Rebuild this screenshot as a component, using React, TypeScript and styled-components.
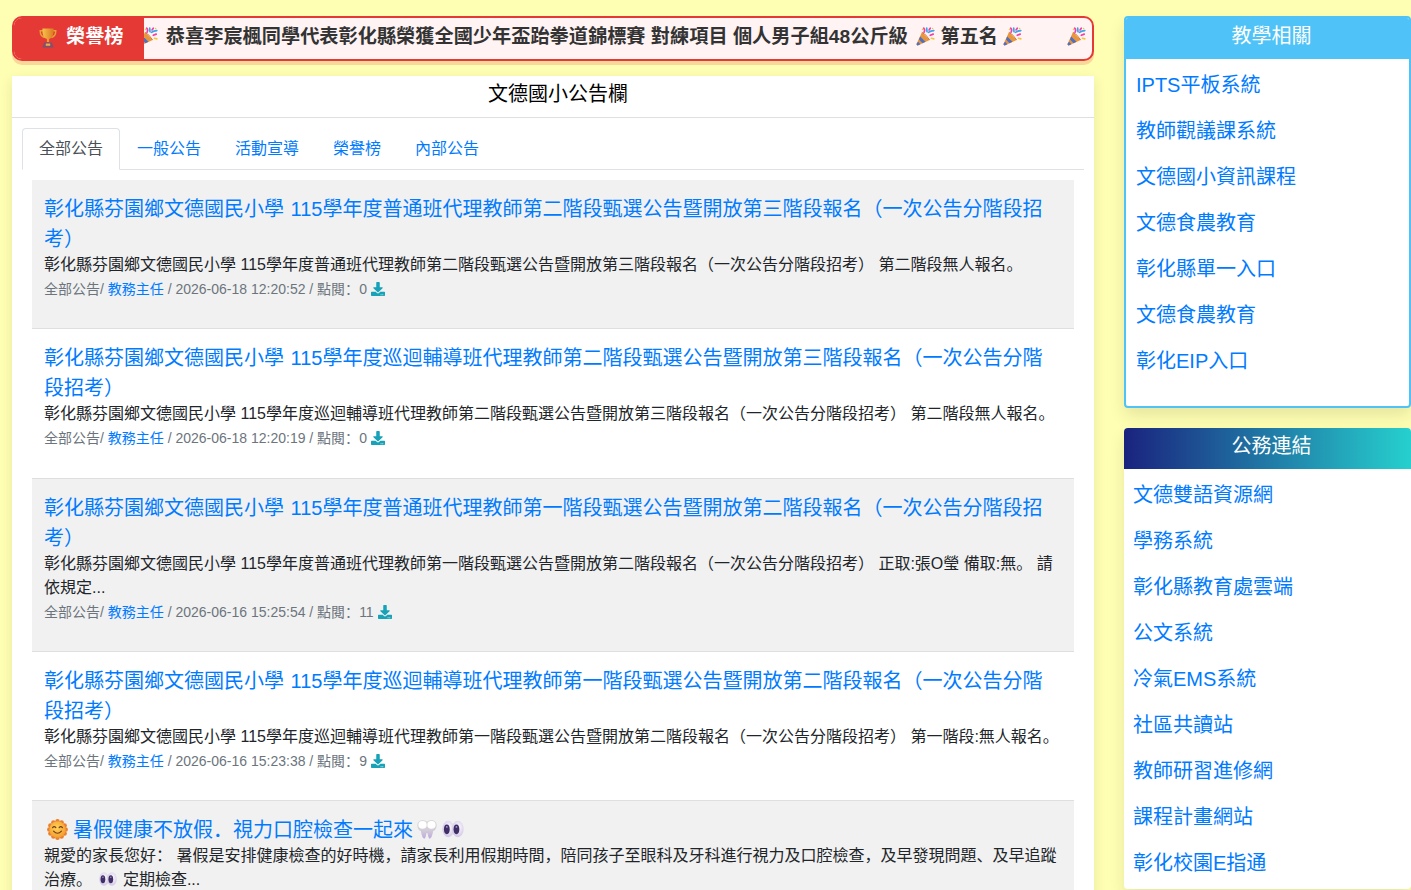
import React from 'react';
import styled, { createGlobalStyle } from 'styled-components';
import { FaDownload } from 'react-icons/fa';

const Global = createGlobalStyle`
  html, body { margin: 0; padding: 0; height: 890px; overflow: hidden; background: #ffffb3; }
  body { font-family: "Liberation Sans", "Noto Sans CJK SC", sans-serif; font-size: 16px; line-height: 1.5; color: #212529; }
  * { box-sizing: border-box; }
  a { color: #007bff; text-decoration: none; }
`;

const Page = styled.div`
  display: flex;
  gap: 30px;
  padding: 16px 0 0 12px;
  align-items: flex-start;
  width: 1411px;
`;
const Main = styled.main`
  width: 1082px;
  flex: none;
  display: flex;
  flex-direction: column;
  gap: 15px;
`;
const Side = styled.aside`
  width: 287px;
  flex: none;
  display: flex;
  flex-direction: column;
  gap: 20px;
`;
const Ticker = styled.div`
  display: flex;
  height: 45px;
  border: 2px solid #e53935;
  border-radius: 10px;
  background: #fff3f3;
  box-shadow: 0 4px 0 rgba(229, 57, 53, 0.2);
  overflow: hidden;
`;
const TickerLabel = styled.div`
  flex: none;
  width: 130px;
  padding: 0 0 2px 25px;
  background: #e53935;
  color: #fff;
  font-weight: 700;
  font-size: 19.2px;
  display: flex;
  align-items: center;
  gap: 9px;
`;
const TickerTrack = styled.div`
  flex: 1;
  overflow: hidden;
  display: flex;
  align-items: center;
  padding-bottom: 2px;
  white-space: nowrap;
  font-size: 19.2px;
  font-weight: 700;
  color: #333;
`;
const TickerText = styled.span`
  margin-left: -5.5px;
`;
const Emoji = styled.svg<{ $l?: number; $r?: number; $drop?: number }>`
  display: inline-block;
  vertical-align: -${p => p.$drop ?? 3}px;
  margin-left: ${p => p.$l ?? 0}px;
  margin-right: ${p => p.$r ?? 0}px;
`;
const Card = styled.section`
  background: #fff;
  box-shadow: 0 4px 12px rgba(0, 0, 0, 0.1);
  height: 900px;
`;
const CardHead = styled.h1`
  margin: 0;
  height: 42px;
  border-bottom: 1px solid #dfdfdf;
  font-size: 20px;
  font-weight: 400;
  line-height: 30px;
  padding: 3px 0 0 10px;
  color: #000;
  text-align: center;
`;
const CardBody = styled.div`
  padding: 10px;
`;
const Tabs = styled.nav`
  display: flex;
  border-bottom: 1px solid #dee2e6;
  height: 42px;
`;
const Tab = styled.a<{ $active?: boolean }>`
  height: 42px;
  padding: 8px 16px;
  border: 1px solid ${p => (p.$active ? '#dee2e6' : 'transparent')};
  border-bottom-color: ${p => (p.$active ? '#fff' : 'transparent')};
  border-radius: 4px 4px 0 0;
  background: ${p => (p.$active ? '#fff' : 'transparent')};
  color: ${p => (p.$active ? '#495057' : '#007bff')};
`;
const List = styled.div`
  margin: 10px 10px 0;
`;
const Row = styled.article<{ $shade?: boolean }>`
  padding: 14px 12px 28.25px;
  background: ${p => (p.$shade ? '#f1f1f1' : '#fff')};
  border-bottom: 1px solid #dfdfdf;
`;
const RowTitle = styled.a`
  display: block;
  font-size: 20px;
  line-height: 30px;
  word-spacing: 1px;
  margin-bottom: -1px;
`;
const RowText = styled.p`
  margin: 0;
`;
const Meta = styled.div`
  font-size: 14px;
  line-height: 21px;
  margin-top: 2px;
  color: #6c757d;
`;
const DownloadIcon = styled(FaDownload)`
  color: #17a2b8;
  font-size: 14px;
  vertical-align: -2px;
`;
const SideCard = styled.section<{ $outlined?: boolean }>`
  background: #fff;
  border-radius: 4px;
  overflow: hidden;
  box-shadow: 0 8px 16px rgba(0, 0, 0, 0.1);
  border: ${p => (p.$outlined ? '2px solid #4fc3f7' : 'none')};
`;
const SideHead = styled.h2<{ $gradient?: boolean }>`
  margin: 0;
  height: 41px;
  background: ${p => (p.$gradient ? 'linear-gradient(90deg, #1a237e, #26d0ce)' : '#4fc3f7')};
  color: #fff;
  font-size: 20px;
  font-weight: 400;
  line-height: 36px;
  padding-left: 8px;
  text-align: center;
`;
const SideLinks = styled.ul<{ $outlined?: boolean }>`
  list-style: none;
  margin: 0;
  padding: ${p => (p.$outlined ? '6px 10px 19px' : '6px 9px 0')};
`;
const SideItem = styled.li`
  height: 46px;
  font-size: 20px;
  line-height: 30px;
  padding-top: 5px;
`;

type EP = { size?: number; l?: number; r?: number };

const Popper = ({ size = 19, l, r }: EP) => (
  <Emoji width={size} height={size} viewBox="0 0 32 32" $l={l} $r={r}>
    <path d="M10 9 L23 22 L3 31 Q0 31 1 28 Z" fill="#e9973a" />
    <path d="M7 16 L16 25 L11 27.5 L5 21 Z" fill="#4f6fc4" />
    <path d="M3.5 25 L7.5 29 L3 31 Q0 31 1 28 Z" fill="#4f6fc4" />
    <path d="M10 9 Q17 12 23 22" fill="none" stroke="#c9702a" strokeWidth="1.5" />
    <g fill="none" strokeWidth="2.8" strokeLinecap="round">
      <path d="M13 2 Q16 5 13.5 9" stroke="#ef3fa8" />
      <path d="M21 9 Q25 6 30 6" stroke="#33a8ea" />
      <path d="M18 2 L18.5 8" stroke="#33a8ea" />
      <path d="M24 2 L22 5" stroke="#ef3fa8" />
      <path d="M24 14 L29 12" stroke="#ef3fa8" />
      <path d="M26 19 L30 20" stroke="#f4c33c" />
    </g>
    <circle cx="11" cy="4" r="1.3" fill="#f4c33c" />
    <circle cx="28" cy="2.5" r="1.3" fill="#f4c33c" />
  </Emoji>
);

const Trophy = () => (
  <Emoji width={18} height={20} viewBox="0 0 32 36">
    <defs>
      <linearGradient id="cup" x1="0" y1="0" x2="1" y2="0">
        <stop offset="0" stopColor="#f8c24a" />
        <stop offset="1" stopColor="#d97a22" />
      </linearGradient>
    </defs>
    <path d="M7 5 H2 Q2 15 10 17 M25 5 H30 Q30 15 22 17" fill="none" stroke="#e8a235" strokeWidth="2.6" />
    <path d="M6 1 H26 Q27 18 18 20 V25 H14 V20 Q5 18 6 1 Z" fill="url(#cup)" />
    <path d="M9 26 H23 L26 35 H6 Z" fill="#7d5270" />
    <rect x="12" y="28" width="8" height="4" fill="#e8b04a" />
  </Emoji>
);

const Sun = () => (
  <Emoji width={21} height={21} viewBox="0 0 32 32" $l={3} $r={5} $drop={3}>
    <defs>
      <radialGradient id="sunf" cx="0.45" cy="0.4" r="0.65">
        <stop offset="0" stopColor="#ffd257" />
        <stop offset="1" stopColor="#f39a2c" />
      </radialGradient>
    </defs>
    {Array.from({ length: 12 }).map((_, i) => (
      <circle
        key={i}
        cx={16 + 12.5 * Math.cos((i * Math.PI) / 6)}
        cy={16 + 12.5 * Math.sin((i * Math.PI) / 6)}
        r="3.4"
        fill="#ea7f2c"
      />
    ))}
    <circle cx="16" cy="16" r="12.5" fill="url(#sunf)" />
    <path d="M8.5 13 Q11 10 13.5 13 M18.5 13 Q21 10 23.5 13" fill="none" stroke="#6f3d1c" strokeWidth="1.8" strokeLinecap="round" />
    <path d="M10 18.5 Q16 25 22 18.5" fill="none" stroke="#6f3d1c" strokeWidth="1.8" strokeLinecap="round" />
  </Emoji>
);

const Tooth = () => (
  <Emoji width={22} height={22} viewBox="0 0 32 32" $l={3}>
    <defs>
      <linearGradient id="tth" x1="0" y1="0" x2="0" y2="1">
        <stop offset="0" stopColor="#dcdcdc" />
        <stop offset="0.55" stopColor="#d2cdd8" />
        <stop offset="1" stopColor="#bfa9dc" />
      </linearGradient>
    </defs>
    <path d="M8 3 Q13 2 16 5 Q19 2 24 3 Q31 5 30 12 Q29 18 25 19 Q23 30 20 30 Q18 30 17 23 Q16 20 15 23 Q14 30 12 30 Q9 30 7 19 Q3 18 2 12 Q1 5 8 3 Z" fill="url(#tth)" />
    <ellipse cx="9.5" cy="10" rx="6" ry="5.5" fill="#fff" />
    <ellipse cx="22.5" cy="10" rx="6" ry="5.5" fill="#fff" />
  </Emoji>
);

const Eyes = ({ size = 22, l, r }: EP) => (
  <Emoji width={size} height={size} viewBox="0 0 32 32" $l={l} $r={r}>
    <defs>
      <radialGradient id="eyew" cx="0.55" cy="0.4" r="0.7">
        <stop offset="0" stopColor="#fdfcfe" />
        <stop offset="1" stopColor="#cbbde2" />
      </radialGradient>
    </defs>
    <ellipse cx="9" cy="16" rx="8.5" ry="12" fill="url(#eyew)" />
    <ellipse cx="23" cy="16" rx="8.5" ry="12" fill="url(#eyew)" />
    <ellipse cx="7" cy="16.5" rx="4.2" ry="7" fill="#402e66" />
    <ellipse cx="21" cy="16.5" rx="4.2" ry="7" fill="#402e66" />
    <circle cx="7" cy="13" r="1.3" fill="#a595cc" />
    <circle cx="21" cy="13" r="1.3" fill="#a595cc" />
  </Emoji>
);

const rows: { t: React.ReactNode; d: React.ReactNode; m: string; n: number; s: boolean }[] = [
  { t: '彰化縣芬園鄉文德國民小學 115學年度普通班代理教師第二階段甄選公告暨開放第三階段報名（一次公告分階段招考）', d: '彰化縣芬園鄉文德國民小學 115學年度普通班代理教師第二階段甄選公告暨開放第三階段報名（一次公告分階段招考） 第二階段無人報名。', m: '2026-06-18 12:20:52', n: 0, s: true },
  { t: '彰化縣芬園鄉文德國民小學 115學年度巡迴輔導班代理教師第二階段甄選公告暨開放第三階段報名（一次公告分階段招考）', d: '彰化縣芬園鄉文德國民小學 115學年度巡迴輔導班代理教師第二階段甄選公告暨開放第三階段報名（一次公告分階段招考） 第二階段無人報名。', m: '2026-06-18 12:20:19', n: 0, s: false },
  { t: '彰化縣芬園鄉文德國民小學 115學年度普通班代理教師第一階段甄選公告暨開放第二階段報名（一次公告分階段招考）', d: '彰化縣芬園鄉文德國民小學 115學年度普通班代理教師第一階段甄選公告暨開放第二階段報名（一次公告分階段招考） 正取:張O瑩 備取:無。 請依規定...', m: '2026-06-16 15:25:54', n: 11, s: true },
  { t: '彰化縣芬園鄉文德國民小學 115學年度巡迴輔導班代理教師第一階段甄選公告暨開放第二階段報名（一次公告分階段招考）', d: '彰化縣芬園鄉文德國民小學 115學年度巡迴輔導班代理教師第一階段甄選公告暨開放第二階段報名（一次公告分階段招考） 第一階段:無人報名。', m: '2026-06-16 15:23:38', n: 9, s: false },
  {
    t: <><Sun />暑假健康不放假．視力口腔檢查一起來<Tooth /><Eyes l={4} /></>,
    d: <>親愛的家長您好： 暑假是安排健康檢查的好時機，請家長利用假期時間，陪同孩子至眼科及牙科進行視力及口腔檢查，及早發現問題、及早追蹤治療。 <Eyes size={18} l={3} r={1} /> 定期檢查...</>,
    m: '2026-06-16 15:20:00', n: 5, s: true,
  },
];
const teach = ['IPTS平板系統', '教師觀議課系統', '文德國小資訊課程', '文德食農教育', '彰化縣單一入口', '文德食農教育', '彰化EIP入口'];
const work = ['文德雙語資源網', '學務系統', '彰化縣教育處雲端', '公文系統', '冷氣EMS系統', '社區共讀站', '教師研習進修網', '課程計畫網站', '彰化校園E指通'];

export default function App() {
  return (
    <Page>
      <Global />
      <Main>
        <Ticker>
          <TickerLabel><Trophy /> 榮譽榜</TickerLabel>
          <TickerTrack>
            <TickerText>
              <Popper r={3} /> 恭喜李宸楓同學代表彰化縣榮獲全國少年盃跆拳道錦標賽 對練項目 個人男子組48公斤級 <Popper l={3} /> 第五名 <Popper />
              <Popper l={45} />
            </TickerText>
          </TickerTrack>
        </Ticker>
        <Card>
          <CardHead>文德國小公告欄</CardHead>
          <CardBody>
            <Tabs>
              <Tab $active>全部公告</Tab>
              <Tab>一般公告</Tab>
              <Tab>活動宣導</Tab>
              <Tab>榮譽榜</Tab>
              <Tab>內部公告</Tab>
            </Tabs>
            <List>
              {rows.map((r, i) => (
                <Row key={i} $shade={r.s}>
                  <RowTitle>{r.t}</RowTitle>
                  <RowText>{r.d}</RowText>
                  <Meta>全部公告/ <a>教務主任</a> / {r.m} / 點閱：{r.n} <DownloadIcon /></Meta>
                </Row>
              ))}
            </List>
          </CardBody>
        </Card>
      </Main>
      <Side>
        <SideCard $outlined>
          <SideHead>教學相關</SideHead>
          <SideLinks $outlined>{teach.map((x, i) => <SideItem key={i}><a>{x}</a></SideItem>)}</SideLinks>
        </SideCard>
        <SideCard>
          <SideHead $gradient>公務連結</SideHead>
          <SideLinks>{work.map((x, i) => <SideItem key={i}><a>{x}</a></SideItem>)}</SideLinks>
        </SideCard>
      </Side>
    </Page>
  );
}
